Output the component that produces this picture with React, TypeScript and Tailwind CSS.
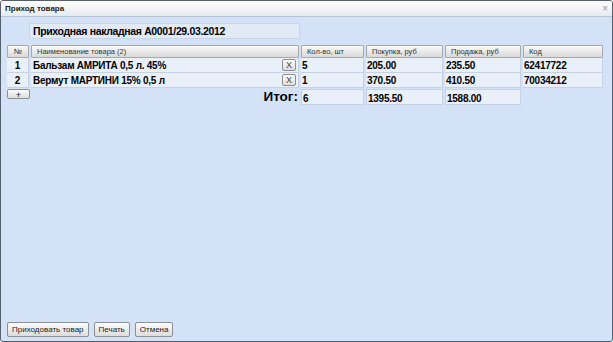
import React from 'react'

const rows = [
  { n: 1, name: 'Бальзам АМРИТА 0,5 л. 45%', qty: '5', buy: '205.00', sell: '235.50', code: '62417722' },
  { n: 2, name: 'Вермут МАРТИНИ 15% 0,5 л', qty: '1', buy: '370.50', sell: '410.50', code: '70034212' },
]

const cols = 'grid grid-cols-[22px_268px_63px_77px_76px_80px]'

function Head({ children, className = '' }: { children?: React.ReactNode; className?: string }) {
  return (
    <div
      className={`h-[13px] border border-[#a9a9a9] rounded-[1px] bg-gradient-to-b from-[#fafafa] to-[#d9d9d9] text-[7.5px] leading-[11px] text-[#333] px-[5px] ${className}`}
    >
      {children}
    </div>
  )
}

function Cell({ children, className = '' }: { children?: React.ReactNode; className?: string }) {
  return (
    <div className={`h-[15px] bg-[#e9f0fa] border-b border-r border-[#c3d2e6] text-[10px] tracking-[-0.25px] leading-[15px] font-bold text-black px-[1px] ${className}`}>
      {children}
    </div>
  )
}

function Btn({ children, className = '' }: { children: React.ReactNode; className?: string }) {
  return (
    <button
      className={`block border border-[#8f8f8f] rounded-[2px] bg-gradient-to-b from-[#fdfdfd] to-[#dcdcdc] text-[8px] leading-[11px] text-[#222] ${className}`}
    >
      {children}
    </button>
  )
}

export default function App() {
  return (
    <div className="w-[613px] h-[342px] font-['Liberation_Sans',Arial,sans-serif] bg-white">
      <div className="w-full h-full flex flex-col border border-[#55606c] rounded-[3px] overflow-hidden bg-[#d3e2f7]">
        <div className="h-[16px] flex items-center justify-between pl-[4px] pr-[4px] bg-gradient-to-b from-[#ffffff] to-[#e6e9ee] border-b border-[#b8c4d4]">
          <span className="text-[8px] font-bold text-[#222]">Приход товара</span>
          <span className="text-[10px] text-[#999] leading-none">×</span>
        </div>

        <div className="flex-1 flex flex-col pl-[6px] pt-[6px]">
          <div className="ml-[22px] w-[271px] h-[16px] bg-[#e2eaf6] border border-[#c9d5e6] text-[10.5px] tracking-[-0.35px] leading-[14px] font-bold text-black pl-[3px]">
            Приходная накладная А0001/29.03.2012
          </div>

          <div className={`${cols} gap-x-[2px] mt-[6px]`}>
            <Head className="text-center px-0">№</Head>
            <Head>Наименование товара (2)</Head>
            <Head>Кол-во, шт</Head>
            <Head>Покупка, руб</Head>
            <Head>Продажа, руб</Head>
            <Head>Код</Head>
          </div>

          {rows.map((r) => (
            <div key={r.n} className={`${cols} gap-x-[2px]`}>
              <Cell className="text-center">{r.n}</Cell>
              <Cell className="flex items-center justify-between pl-[2px]">
                <span>{r.name}</span>
                <Btn className="w-[14px] h-[12px] mr-[1px] font-normal tracking-normal text-[9px] leading-[10px] text-[#444]">X</Btn>
              </Cell>
              <Cell>{r.qty}</Cell>
              <Cell className="pl-[1px]">{r.buy}</Cell>
              <Cell className="pl-[1px]">{r.sell}</Cell>
              <Cell className="pl-[1px]">{r.code}</Cell>
            </div>
          ))}

          <div className={`${cols} gap-x-[2px] mt-[1px]`}>
            <div>
              <Btn className="w-[23px] h-[10px] text-[9px] leading-[8px]">+</Btn>
            </div>
            <div className="text-right text-[13.5px] font-bold leading-[13px] pr-[1px] pt-[1px] text-black">Итог:</div>
            <Cell className="h-[16px] leading-[18px] border-l border-t">6</Cell>
            <Cell className="h-[16px] leading-[18px] border-l border-t">1395.50</Cell>
            <Cell className="h-[16px] leading-[18px] border-l border-t">1588.00</Cell>
            <div />
          </div>

          <div className="flex-1" />

          <div className="flex gap-[5px] pb-[4px]">
            <Btn className="h-[15px] px-[4px]">Приходовать товар</Btn>
            <Btn className="h-[15px] px-[4px]">Печать</Btn>
            <Btn className="h-[15px] px-[4px]">Отмена</Btn>
          </div>
        </div>
      </div>
    </div>
  )
}
